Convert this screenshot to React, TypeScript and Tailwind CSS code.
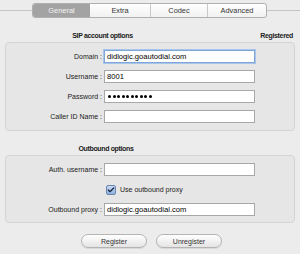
import { Check } from 'lucide-react';

const tabs = ['General', 'Extra', 'Codec', 'Advanced'];

function Field({ label, value, focused, dots }: { label: string; value?: string; focused?: boolean; dots?: boolean }) {
  return (
    <div className="flex items-center">
      <div className="w-[98px] text-right pr-[2px] text-[#1a1a1a]">{label}</div>
      <div
        className={`w-[151px] h-[13px] bg-white flex items-center px-[2px] ${
          focused ? 'border border-[#7ea6d9] shadow-[0_0_0_1px_#a9c6ea]' : 'border border-[#a8a8a8]'
        }`}
      >
        {dots ? (
          <div className="flex gap-[1.5px] pl-[1px]">
            {Array.from({ length: 10 }).map((_, i) => (
              <div key={i} className="w-[3px] h-[3px] rounded-full bg-black" />
            ))}
          </div>
        ) : (
          <span className="text-black text-[7.6px]">{value}</span>
        )}
      </div>
    </div>
  );
}

function Btn({ children }: { children: string }) {
  return (
    <button className="w-[66px] h-[14px] rounded-full border border-[#b4b4b4] bg-gradient-to-b from-white to-[#e4e4e4] text-[#333] leading-none shadow-[0_1px_0_#d8d8d8]">
      {children}
    </button>
  );
}

export default function App() {
  return (
    <div
      className="w-[300px] h-[254px] bg-[#ececec] text-[7px] leading-[9px] overflow-hidden"
      style={{ fontFamily: '"Liberation Sans", Arial, sans-serif' }}
    >
      {/* Tab bar */}
      <div className="flex items-center pt-[3px] h-[18px]">
        <div className="w-[32px] h-px bg-[#c4c4c4]" />
        <div className="flex w-[235px] h-[15px] border border-[#b0b0b0] rounded-[3px] overflow-hidden bg-gradient-to-b from-white to-[#f1f1f1] text-[7.4px]">
          {tabs.map((t, i) => (
            <div
              key={t}
              className={`flex items-center justify-center ${
                i === 0
                  ? 'w-[57px] bg-[#a3a3a3] text-[#f4f4f4]'
                  : i === 1
                  ? 'w-[60px] text-[#333]'
                  : i === 2
                  ? 'w-[57px] text-[#333] border-l border-[#c8c8c8]'
                  : 'flex-1 text-[#333] border-l border-[#c8c8c8]'
              }`}
            >
              {t}
            </div>
          ))}
        </div>
        <div className="flex-1 h-px bg-[#c4c4c4]" />
      </div>

      {/* SIP account */}
      <div className="flex items-center mt-[13px] h-[9px] font-bold text-[#222] tracking-[-0.35px]">
        <div className="w-[205px] text-center">SIP account options</div>
        <div className="ml-auto pr-[7px]">Registered</div>
      </div>
      <div className="mx-[5px] mt-[2px] h-[89px] border border-[#d4d4d4] rounded-[4px] bg-[#e6e6e6] flex flex-col gap-[7px] pt-[7px]">
        <Field label="Domain :" value="didlogic.goautodial.com" focused />
        <Field label="Username :" value="8001" />
        <Field label="Password :" dots />
        <Field label="Caller ID Name :" />
      </div>

      {/* Outbound */}
      <div className="mt-[13px] h-[9px] font-bold text-[#222] tracking-[-0.35px] flex">
        <div className="w-[212px] text-center">Outbound options</div>
      </div>
      <div className="mx-[5px] mt-[2px] h-[68px] border border-[#d4d4d4] rounded-[4px] bg-[#e6e6e6] flex flex-col pt-[7px]">
        <Field label="Auth. username :" />
        <div className="flex items-center h-[11px] mt-[8px] pl-[100px]">
          <div className="w-[10px] h-[10px] rounded-[2px] border border-[#6b86b3] bg-gradient-to-b from-[#c9dbf3] to-[#8fb1e0] flex items-center justify-center">
            <Check className="w-[10px] h-[10px] text-[#1c2a45]" strokeWidth={4} />
          </div>
          <span className="ml-[4px] text-[#1a1a1a]">Use outbound proxy</span>
        </div>
        <div className="mt-[8px]">
          <Field label="Outbound proxy :" value="didlogic.goautodial.com" />
        </div>
      </div>

      {/* Buttons */}
      <div className="flex gap-[9px] pl-[81px] mt-[11px]">
        <Btn>Register</Btn>
        <Btn>Unregister</Btn>
      </div>
    </div>
  );
}
